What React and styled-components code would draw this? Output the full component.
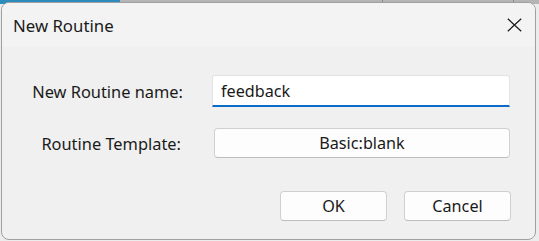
import React from "react";
import styled, { createGlobalStyle } from "styled-components";

const GlobalStyle = createGlobalStyle`
  html, body {
    margin: 0;
    padding: 0;
    width: 539px;
    height: 241px;
    overflow: hidden;
  }
  body {
    background:
      linear-gradient(to right, #2d8cbd 0 120px, #b5b5b5 120px 382px, #8a8a8a 382px 383px, #b5b5b5 383px 513px, #8a8a8a 513px 514px, #b5b5b5 514px) top / 100% 4px no-repeat,
      #ececec;
    font-family: "Segoe UI", "Noto Sans", "Open Sans", sans-serif;
  }
`;

const Screen = styled.div`
  padding: 2px 2px 0 1px;
`;

const Window = styled.div`
  width: 535px;
  height: 238px;
  box-sizing: border-box;
  border: 1px solid #a0a0a0;
  border-radius: 8px;
  background: #f0f0f0;
  overflow: hidden;
  display: flex;
  flex-direction: column;
`;

const TitleBar = styled.div`
  height: 44px;
  flex: none;
  display: flex;
  align-items: center;
  justify-content: space-between;
  background: #f3f3f3;
  padding: 0 13px 0 11px;
`;

const Title = styled.span`
  font-size: 16.8px;
  color: #1a1a1a;
  margin-top: 1px;
`;

const CloseIcon = () => (
  <svg width="15" height="14" viewBox="0 0 15 14">
    <path d="M0.8 0.8 L14.2 13.2 M14.2 0.8 L0.8 13.2" stroke="#1b1b1b" strokeWidth="1.2" fill="none" />
  </svg>
);

const Body = styled.div`
  flex: 1;
  padding: 28px 0 0 0;
  display: flex;
  flex-direction: column;
`;

const Form = styled.div`
  display: grid;
  grid-template-columns: 181px 298px;
  column-gap: 29px;
  row-gap: 21px;
  align-items: center;
`;

const Label = styled.span`
  text-align: right;
  font-size: 16.4px;
  color: #1a1a1a;
  padding-right: ${(p) => p.$inset || "0"};
`;

const Input = styled.div`
  height: 32px;
  box-sizing: border-box;
  background: #ffffff;
  border: 1px solid #e2e2e2;
  border-bottom: 2px solid #0a6cc8;
  border-radius: 3px 3px 0 0;
  padding: 0 8px;
  display: flex;
  align-items: center;
  font-size: 16.2px;
  color: #1a1a1a;
`;

const Button = styled.div`
  height: 30px;
  width: ${(p) => p.$width || "auto"};
  margin-left: ${(p) => p.$inset || "0"};
  box-sizing: border-box;
  background: #fdfdfd;
  border: 1px solid #d0d0d0;
  border-bottom-color: #bdbdbd;
  border-radius: 4px;
  display: flex;
  align-items: center;
  justify-content: center;
  font-size: 16.2px;
  color: #1a1a1a;
`;

const Footer = styled.div`
  margin-top: 33px;
  display: flex;
  justify-content: flex-end;
  gap: 17px;
  padding-right: 24px;
`;

export default function App() {
  return (
    <>
      <GlobalStyle />
      <Screen>
        <Window>
          <TitleBar>
            <Title>New Routine</Title>
            <CloseIcon />
          </TitleBar>
          <Body>
            <Form>
              <Label>New Routine name:</Label>
              <Input>feedback</Input>
              <Label $inset="2px">Routine Template:</Label>
              <Button $inset="2px">Basic:blank</Button>
            </Form>
            <Footer>
              <Button $width="107px">OK</Button>
              <Button $width="107px">Cancel</Button>
            </Footer>
          </Body>
        </Window>
      </Screen>
    </>
  );
}
